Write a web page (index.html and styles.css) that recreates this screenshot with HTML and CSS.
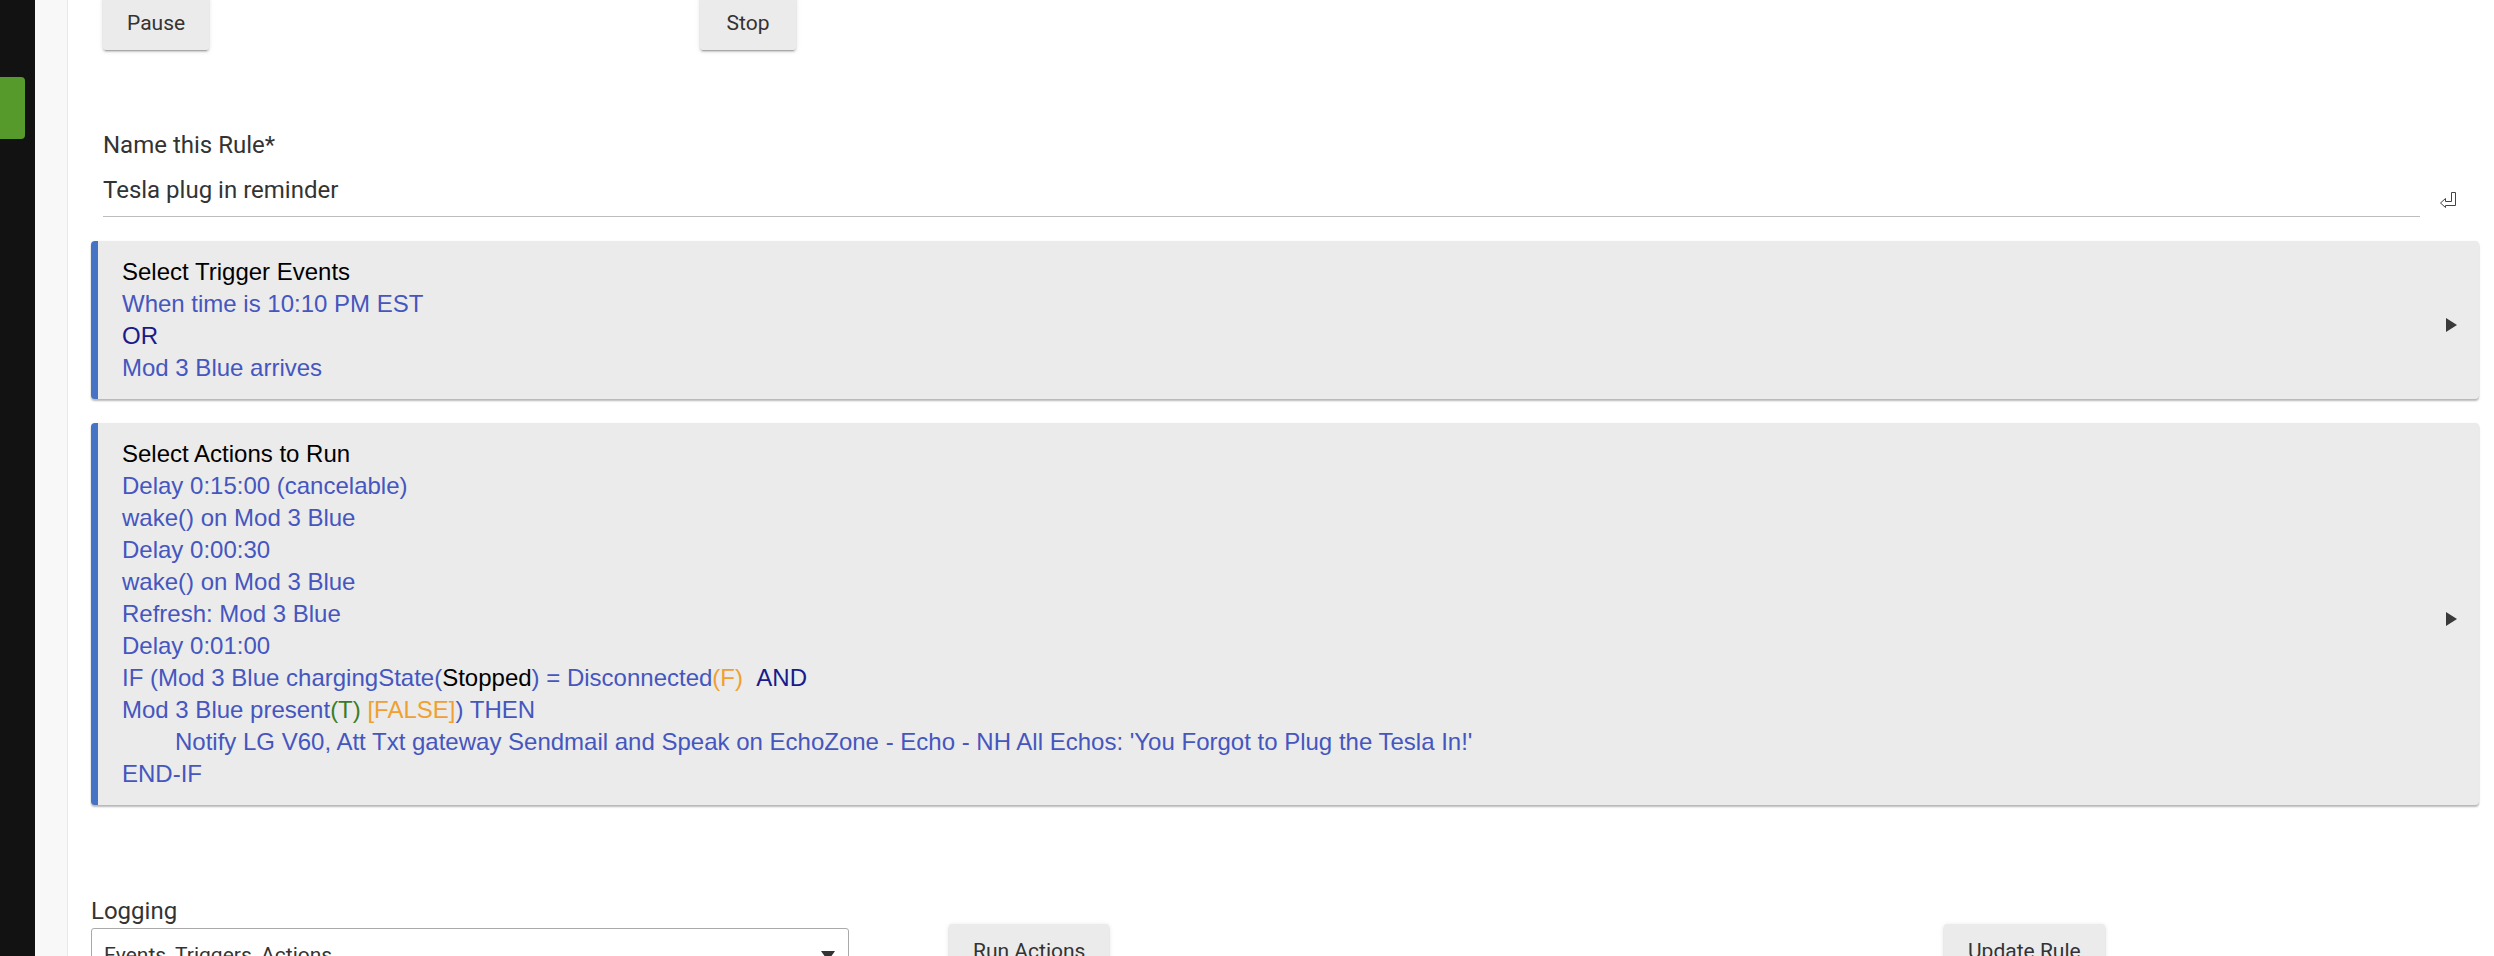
FILE: index.html
```html
<!DOCTYPE html>
<html>
  <head>
    <title>Tesla plug in reminder</title>
    <link rel="stylesheet" href="styles.css">
  </head>
  <body>
    <div class="app">
      <aside class="nav"><div class="nav-tab"></div></aside>
      <div class="gutter"></div>

      <main class="main">
        <div class="btn-row">
          <button class="btn btn-pause">Pause</button>
          <button class="btn btn-stop">Stop</button>
        </div>

        <div class="field">
          <div class="field-label">Name this Rule*</div>
          <div class="name-row">
            <div class="name-input">Tesla plug in reminder</div>
            <svg class="enter-icon" width="16" height="17" viewBox="0 0 16 17">
              <path d="M0.5 12 L5.5 7.5 L5.5 10.5 L11.5 10.5 L11.5 1.5 L15.5 1.5 L15.5 14.5 L5.5 14.5 L5.5 16.5 Z" fill="#fff" stroke="#444" stroke-width="1"/>
            </svg>
          </div>
        </div>

        <div class="card">
          <div class="card-body">
            <div class="card-title">Select Trigger Events</div>
            <div class="lnk">When time is 10:10 PM EST</div>
            <div class="op">OR</div>
            <div class="lnk">Mod 3 Blue arrives</div>
          </div>
          <div class="card-arrow"></div>
        </div>

        <div class="card">
          <div class="card-body">
            <div class="card-title">Select Actions to Run</div>
            <div class="lnk">Delay 0:15:00 (cancelable)</div>
            <div class="lnk">wake() on Mod 3 Blue</div>
            <div class="lnk">Delay 0:00:30</div>
            <div class="lnk">wake() on Mod 3 Blue</div>
            <div class="lnk">Refresh: Mod 3 Blue</div>
            <div class="lnk">Delay 0:01:00</div>
            <div class="lnk">IF (Mod 3 Blue chargingState(<span class="val">Stopped</span>) = Disconnected<span class="no">(F)</span> <span class="op">&nbsp;AND</span></div>
            <div class="lnk">Mod 3 Blue present<span class="yes">(T)</span> <span class="no">[FALSE]</span>) THEN</div>
            <div class="lnk indent">Notify LG V60, Att Txt gateway Sendmail and Speak on EchoZone - Echo - NH All Echos: 'You Forgot to Plug the Tesla In!'</div>
            <div class="lnk">END-IF</div>
          </div>
          <div class="card-arrow"></div>
        </div>

        <div class="bottom-row">
          <div class="log-field">
            <div class="field-label">Logging</div>
            <div class="select">
              <span>Events, Triggers, Actions</span>
              <span class="select-arrow"></span>
            </div>
          </div>
          <button class="btn btn-run">Run Actions</button>
          <button class="btn btn-update">Update Rule</button>
        </div>
      </main>
    </div>
  </body>
</html>
```

FILE: styles.css
```css
body { margin: 0; height: 956px; overflow: hidden; background: #fff; font-family: Roboto, "Liberation Sans", sans-serif; }

.app { display: flex; height: 956px; }

.nav { width: 35px; flex-shrink: 0; background: #121212; }
.nav-tab { width: 25px; height: 62px; margin-top: 77px; background: #559a2b; border-radius: 0 4px 4px 0; }
.gutter { width: 32px; flex-shrink: 0; background: #f8f8f8; border-right: 1px solid #e9e9e9; }

.main { flex: 1; padding: 0 15px 0 23px; min-width: 0; }

.btn { min-width: 96px; height: 54px; padding: 0 24px; border: none; border-radius: 3px; background: #ebebeb; color: #333; font-family: Roboto, sans-serif; font-size: 21px; line-height: 54px; box-shadow: 0 2px 2px 0 rgba(0,0,0,.14), 0 3px 1px -2px rgba(0,0,0,.2), 0 1px 5px 0 rgba(0,0,0,.12); }

.btn-row { display: grid; grid-template-columns: repeat(12, 1fr); margin-top: -4px; }
.btn-pause { grid-column: 1 / 4; justify-self: start; margin-left: 12px; }
.btn-stop { grid-column: 4 / 7; justify-self: start; margin-left: 12px; }

.field { margin-top: 81px; padding: 0 23px 0 12px; }
.field-label { font-size: 24px; line-height: 28px; color: #333; }
.name-row { display: flex; align-items: flex-end; }
.name-input { flex: 1; padding: 17px 0 12px; font-size: 24px; line-height: 28px; color: #333; border-bottom: 1px solid #bdbdbd; }
.enter-icon { margin: 0 0 9px 20px; }

.card { display: flex; margin-top: 24px; padding: 15px 22px 15px 24px; background: #ebebeb; border-left: 7px solid #4674c4; border-radius: 4px; box-shadow: 0 2px 2px rgba(0,0,0,.28), 0 0 2px rgba(0,0,0,.06); font-family: "Liberation Sans", Arial, sans-serif; font-size: 24px; line-height: 32px; }
.card-body { flex: 1; }
.card-title { color: #000; }
.card-arrow { align-self: center; margin-top: 10px; width: 0; height: 0; border-left: 11px solid #3a3a3a; border-top: 7px solid transparent; border-bottom: 7px solid transparent; }

.lnk { color: #4556bf; white-space: nowrap; }
.op { color: #1a1a8a; }
.val { color: #000; }
.no { color: #f0a030; }
.yes { color: #3a7d28; }
.indent { padding-left: 53px; }

.bottom-row { display: grid; grid-template-columns: repeat(12, 1fr); margin-top: 92px; align-items: start; }
.log-field { grid-column: 1 / 5; padding-right: 38px; }
.select { display: flex; justify-content: space-between; align-items: flex-start; height: 52px; margin-top: 3px; padding: 12px 13px 0 12px; box-sizing: border-box; border: 1px solid #a9a9a9; border-radius: 3px; font-size: 21px; line-height: 28px; color: #333; }
.select-arrow { margin-top: 10px; width: 0; height: 0; border-top: 10px solid #333; border-left: 7px solid transparent; border-right: 7px solid transparent; }
.btn-run { grid-column: 5 / 10; justify-self: start; margin: 27px 0 0 62px; }
.btn-update { grid-column: 10 / 13; justify-self: start; margin: 27px 0 0 62px; }
```
